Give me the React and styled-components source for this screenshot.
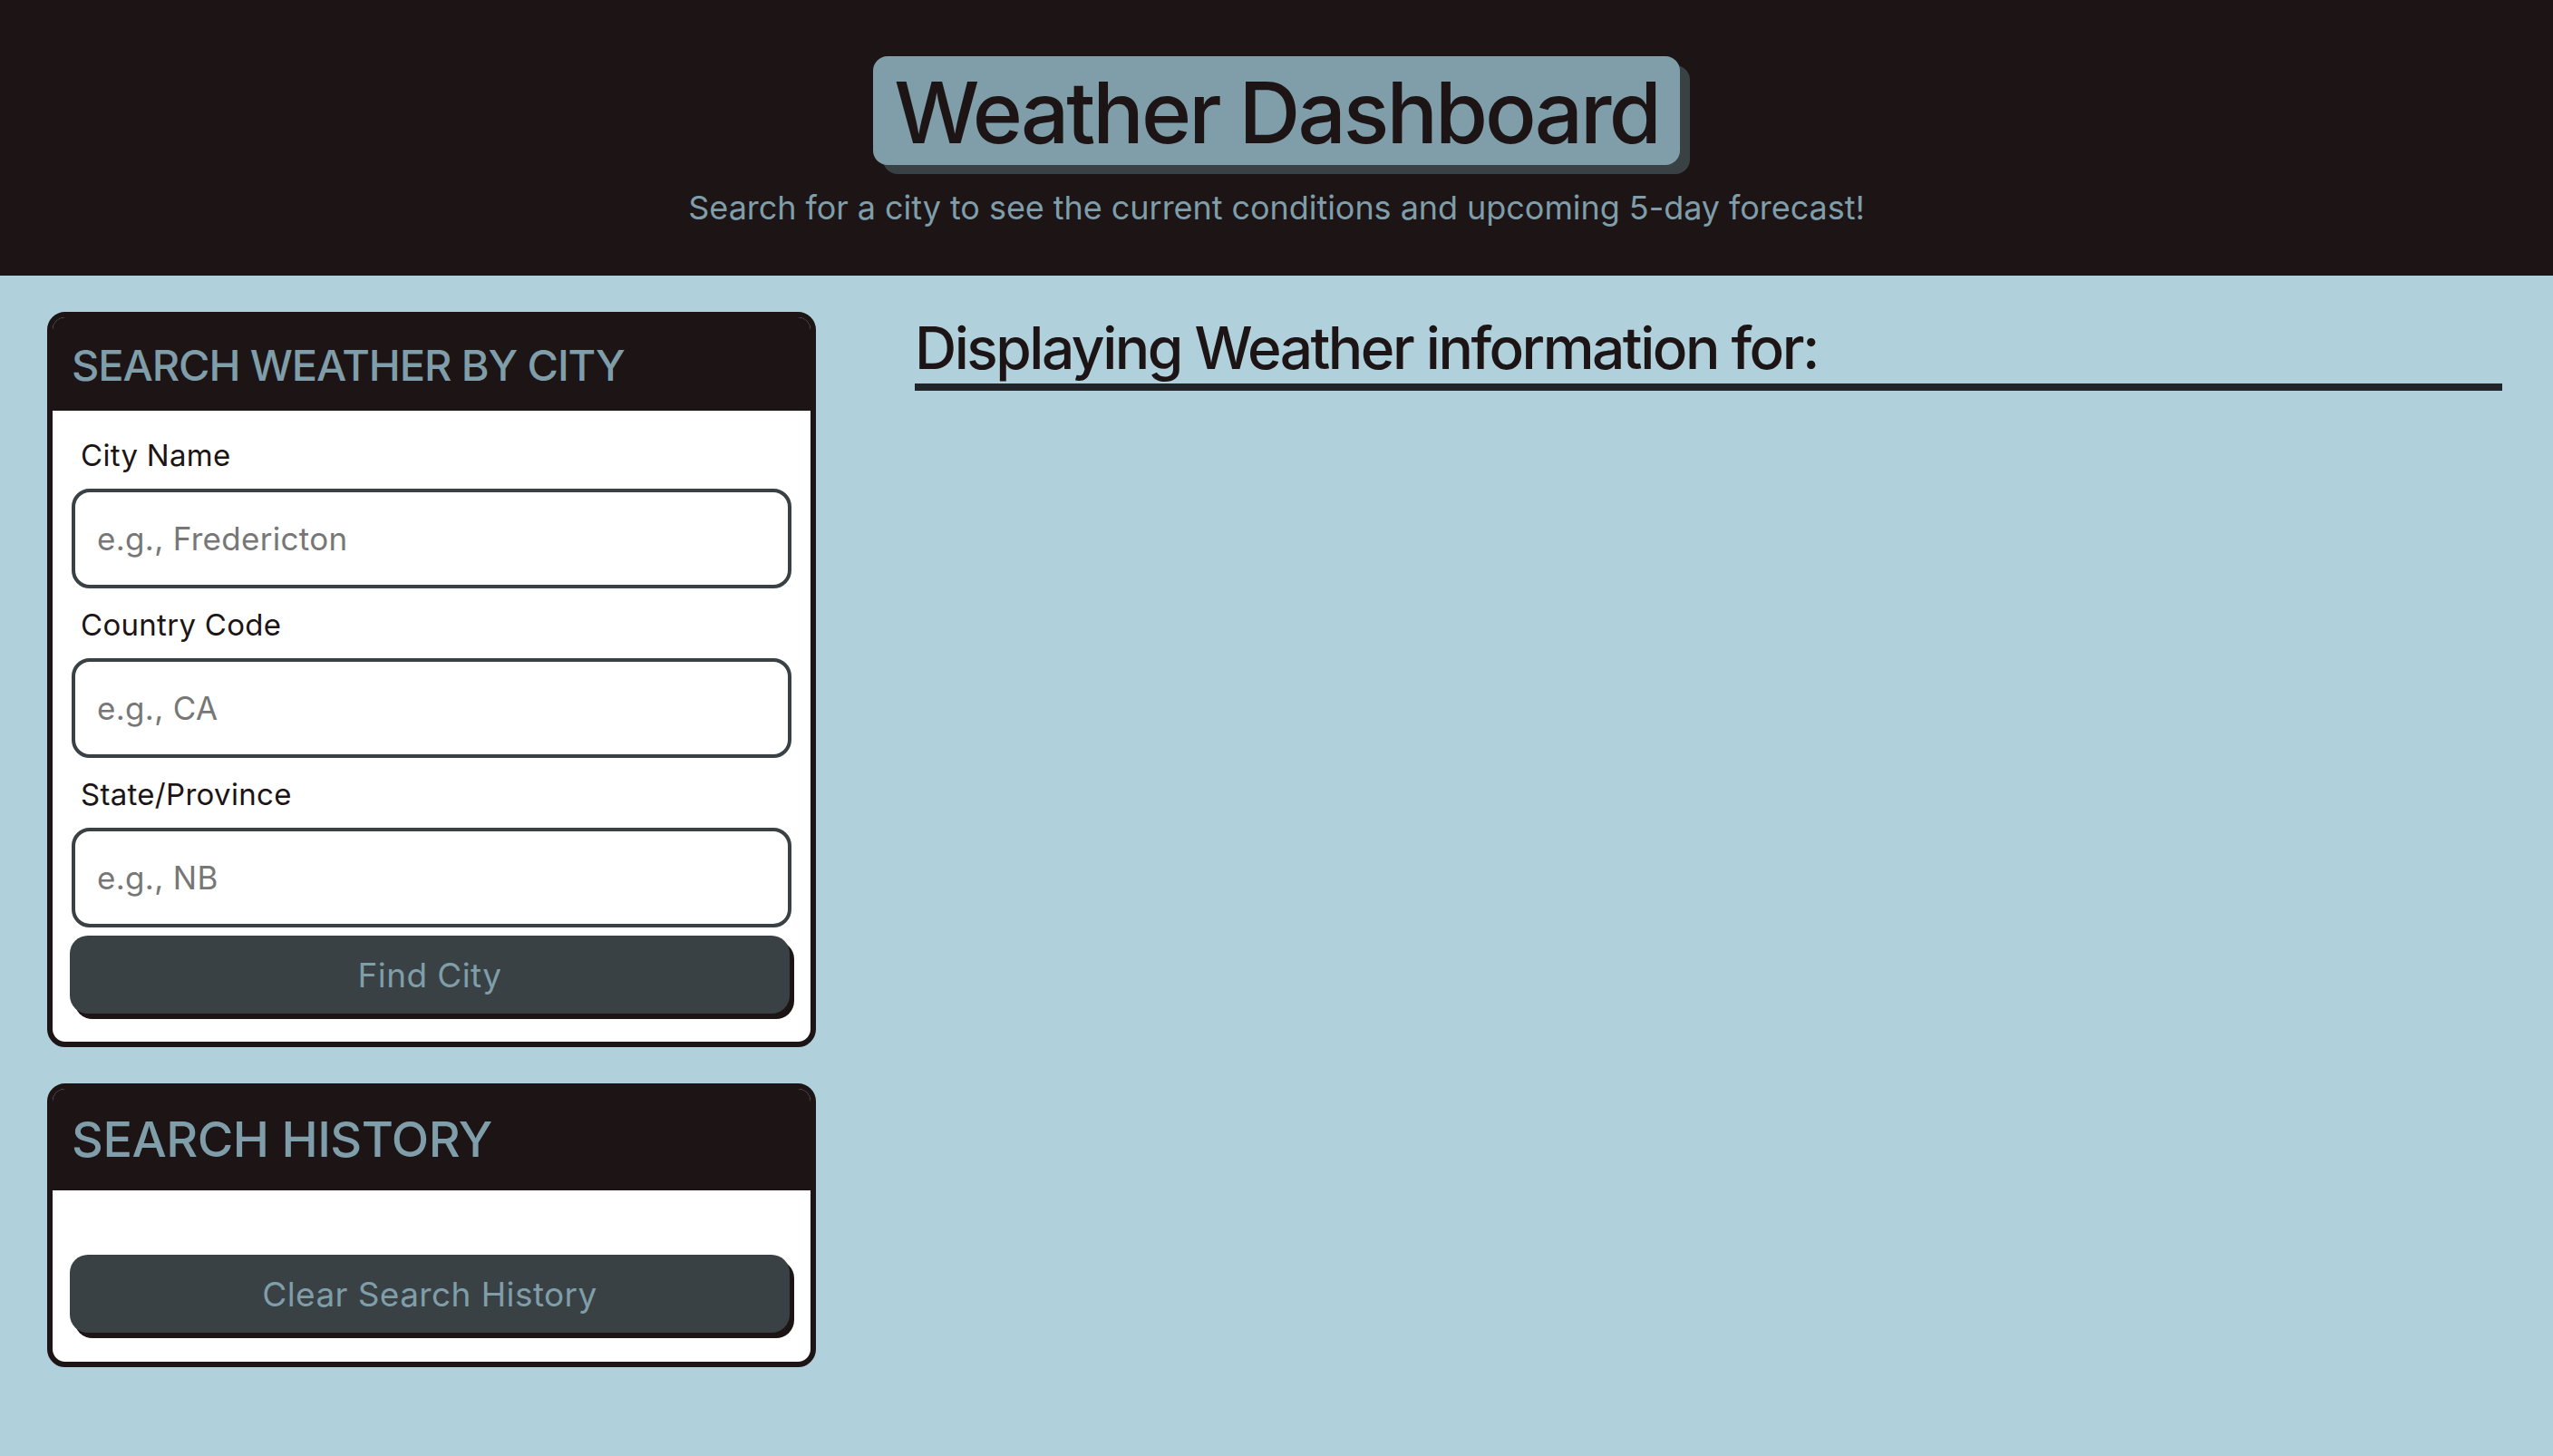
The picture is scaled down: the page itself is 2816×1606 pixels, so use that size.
import React from "react";
import styled, { createGlobalStyle } from "styled-components";

const Global = createGlobalStyle`
  html, body {
    margin: 0;
    padding: 0;
    background: #b0d0db;
    font-family: Inter, "Noto Sans", "Liberation Sans", sans-serif;
    color: #1c1415;
  }
  * { box-sizing: border-box; }
`;

const Page = styled.div`
  min-height: 1606px;
  background: #b0d0db;
`;

const Header = styled.header`
  background: #1c1415;
  height: 304px;
  padding-top: 62px;
  display: flex;
  flex-direction: column;
  align-items: center;
`;

const TitleBox = styled.h1`
  margin: 0;
  background: #7f9ea9;
  color: #1c1415;
  border-radius: 16px;
  box-shadow: 11px 10px 0 #394144;
  font-size: 94px;
  font-weight: 500;
  line-height: 112px;
  height: 120px;
  padding: 6px 23px 2px;
  letter-spacing: -3px;
`;

const Subtitle = styled.p`
  margin: 20px 0 0;
  color: #7f9ea9;
  font-size: 36px;
  line-height: 54px;
  font-weight: 400;
  letter-spacing: -0.05px;
`;

const Main = styled.main`
  display: grid;
  grid-template-columns: 848px 1fr;
  column-gap: 109px;
  padding: 40px 56px 0 52px;
  align-items: start;
`;

const Sidebar = styled.aside`
  display: flex;
  flex-direction: column;
  gap: 40px;
`;

const Card = styled.section`
  border: 6px solid #1c1415;
  border-radius: 20px;
  background: #fff;
  overflow: hidden;
`;

const CardHeader = styled.div`
  background: #1c1415;
  padding: ${(p) => (p.$big ? "25px 21px 25px" : "24px 21px 22px")};
`;

const CardTitle = styled.h2`
  margin: 0;
  color: #7f9ea9;
  font-weight: 500;
  font-size: ${(p) => (p.$big ? "54px" : "47px")};
  line-height: ${(p) => (p.$big ? "62px" : "57px")};
  text-transform: uppercase;
  letter-spacing: ${(p) => (p.$big ? "-0.5px" : "-1.1px")};
`;

const CardBody = styled.div`
  padding: ${(p) => p.$pad};
  display: flex;
  flex-direction: column;
`;

const Label = styled.label`
  display: block;
  font-size: 33px;
  line-height: 48px;
  padding-left: 10px;
  margin-bottom: 13px;
  color: #1c1415;
  letter-spacing: 0.3px;
`;

const Input = styled.input`
  display: block;
  width: 100%;
  height: 110px;
  border: 4px solid #394144;
  border-radius: 20px;
  padding: 0 24px;
  font-family: inherit;
  font-size: 35px;
  letter-spacing: 0.3px;
  color: #1c1415;
  background: #fff;
  margin-bottom: ${(p) => (p.$last ? "9px" : "16px")};
  outline: none;
  &::placeholder {
    color: #777;
  }
`;

const Button = styled.button`
  display: block;
  width: 100%;
  height: 86px;
  border: none;
  border-radius: 20px;
  background: #394144;
  color: #7f9ea9;
  font-family: inherit;
  font-size: 37px;
  letter-spacing: 0.4px;
  box-shadow: 5px 6px 0 #1c1415;
  cursor: pointer;
  margin-left: -2px;
`;

const Content = styled.div`
  padding-top: 2px;
`;

const DisplayHeading = styled.h2`
  margin: 0;
  font-size: 64px;
  font-weight: 500;
  line-height: 1.2;
  color: #1c1415;
  border-bottom: 8px solid #212529;
  letter-spacing: -2.5px;
`;

const fields = [
  { id: "city", label: "City Name", ph: "e.g., Fredericton" },
  { id: "country", label: "Country Code", ph: "e.g., CA" },
  { id: "state", label: "State/Province", ph: "e.g., NB" },
];

export default function App() {
  return (
    <Page>
      <Global />
      <Header>
        <TitleBox>Weather Dashboard</TitleBox>
        <Subtitle>
          Search for a city to see the current conditions and upcoming 5-day forecast!
        </Subtitle>
      </Header>
      <Main>
        <Sidebar>
          <Card>
            <CardHeader>
              <CardTitle>Search Weather by City</CardTitle>
            </CardHeader>
            <CardBody $pad="25px 21px 31px">
              {fields.map((f, i) => (
                <div key={f.id}>
                  <Label htmlFor={f.id}>{f.label}</Label>
                  <Input
                    id={f.id}
                    placeholder={f.ph}
                    $last={i === fields.length - 1}
                  />
                </div>
              ))}
              <Button>Find City</Button>
            </CardBody>
          </Card>
          <Card>
            <CardHeader $big>
              <CardTitle $big>Search History</CardTitle>
            </CardHeader>
            <CardBody $pad="71px 21px 32px">
              <Button>Clear Search History</Button>
            </CardBody>
          </Card>
        </Sidebar>
        <Content>
          <DisplayHeading>Displaying Weather information for:</DisplayHeading>
        </Content>
      </Main>
    </Page>
  );
}
